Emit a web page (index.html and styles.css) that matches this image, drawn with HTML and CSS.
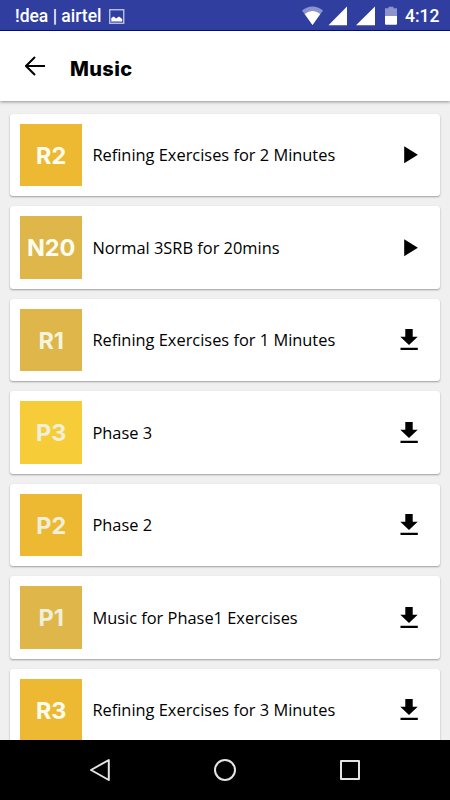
FILE: index.html
```html
<!DOCTYPE html>
<html lang="en">
<head>
    <meta charset="UTF-8">
    <meta name="viewport" content="width=device-width, initial-scale=1.0">
    <title>Music</title>
    <link rel="stylesheet" href="styles.css">
</head>
<body>

    <div class="status-bar">
        <span class="carrier">!dea | airtel</span>
        <svg class="picture-icon" width="16" height="15" viewBox="0 0 16 15">
            <rect x="0.75" y="0.75" width="14" height="13.5" fill="none" stroke="#c5c9e6" stroke-width="1.3"/>
            <path d="M2.3 12.5V9l2.5-1.5L7 9.5l3-2L13.2 10v2.5z" fill="#fff"/>
        </svg>
        <svg class="signal-icons" width="98" height="20" viewBox="0 0 98 20">
            <path d="M0 4.4Q10.5-3.2 21 4.4L10.5 19z" fill="#8d94cb"/>
            <path d="M2.7 8Q10.5 2 18.2 8L10.5 19z" fill="#fff"/>
            <path d="M26.5 19.3L45 .6v18.7zM54 19.3L73 .6v18.7z" fill="#fff"/>
            <path d="M83 2.3h3.5V.8h5v1.5H95v8H83z" fill="#8d94cb"/>
            <path d="M83 10h12v7.7q0 1-1 1H84q-1 0-1-1z" fill="#fff"/>
        </svg>
        <span class="clock">4:12</span>
    </div>

    <div class="header">
        <svg class="back-icon" width="20" height="20" viewBox="0 0 20 20">
            <path d="M10 1L1 10l9 9M1.5 10H20" fill="none" stroke="#000" stroke-width="2"/>
        </svg>
        <h1>Music</h1>
    </div>

    <div class="music-list">
        <div class="card">
            <div class="thumb orange">R2</div>
            <div class="title">Refining Exercises for 2 Minutes</div>
            <svg class="icon" width="18" height="22" viewBox="0 0 18 22"><path d="M4.2 2.2v17L17.9 10.7z"/></svg>
        </div>
        <div class="card">
            <div class="thumb sand">N20</div>
            <div class="title">Normal 3SRB for 20mins</div>
            <svg class="icon" width="18" height="22" viewBox="0 0 18 22"><path d="M4.2 2.2v17L17.9 10.7z"/></svg>
        </div>
        <div class="card">
            <div class="thumb sand dim">R1</div>
            <div class="title">Refining Exercises for 1 Minutes</div>
            <svg class="icon" width="18" height="22" viewBox="0 0 18 22"><path d="M5.3 0h7.4v7.7h5L9 16 .3 7.7h5zM.5 18.8h17.3V21H.5z"/></svg>
        </div>
        <div class="card">
            <div class="thumb yellow faded">P3</div>
            <div class="title">Phase 3</div>
            <svg class="icon" width="18" height="22" viewBox="0 0 18 22"><path d="M5.3 0h7.4v7.7h5L9 16 .3 7.7h5zM.5 18.8h17.3V21H.5z"/></svg>
        </div>
        <div class="card">
            <div class="thumb orange faded">P2</div>
            <div class="title">Phase 2</div>
            <svg class="icon" width="18" height="22" viewBox="0 0 18 22"><path d="M5.3 0h7.4v7.7h5L9 16 .3 7.7h5zM.5 18.8h17.3V21H.5z"/></svg>
        </div>
        <div class="card">
            <div class="thumb sand faded">P1</div>
            <div class="title">Music for Phase1 Exercises</div>
            <svg class="icon" width="18" height="22" viewBox="0 0 18 22"><path d="M5.3 0h7.4v7.7h5L9 16 .3 7.7h5zM.5 18.8h17.3V21H.5z"/></svg>
        </div>
        <div class="card">
            <div class="thumb orange">R3</div>
            <div class="title">Refining Exercises for 3 Minutes</div>
            <svg class="icon" width="18" height="22" viewBox="0 0 18 22"><path d="M5.3 0h7.4v7.7h5L9 16 .3 7.7h5zM.5 18.8h17.3V21H.5z"/></svg>
        </div>
    </div>

    <div class="nav-bar">
        <svg width="24" height="26" viewBox="0 0 24 26"><path d="M20.8 3v20L3 13z"/></svg>
        <svg width="24" height="26" viewBox="0 0 24 26"><circle cx="12" cy="13" r="10"/></svg>
        <svg width="24" height="26" viewBox="0 0 24 26"><rect x="3" y="4" width="18" height="18"/></svg>
    </div>

</body>
</html>
```
FILE: styles.css
```css
* {
    margin: 0;
    padding: 0;
    box-sizing: border-box;
}

body {
    font-family: 'Open Sans', 'Noto Sans', sans-serif;
    display: flex;
    flex-direction: column;
    height: 100vh;
    overflow: hidden;
    background-color: #f0f0f0;
    color: #000;
}

.status-bar {
    display: flex;
    align-items: center;
    flex: none;
    height: 31px;
    padding: 2px 10px 0 15px;
    background: #303f9f;
    border-bottom: 1px solid #000c91;
    color: white;
    font-family: Roboto, sans-serif;
    font-size: 17.5px;
    font-weight: 500;
}

.carrier {
    width: 94px;
    white-space: nowrap;
}

.signal-icons {
    margin-left: auto;
}

.clock {
    width: 35px;
    margin-left: 5px;
    white-space: nowrap;
}

.header {
    display: flex;
    align-items: center;
    flex: none;
    height: 70px;
    padding: 0 25px;
    background: white;
    box-shadow: 0 1px 3px rgba(0, 0, 0, 0.4);
}

.header h1 {
    margin: 6px 0 0 25px;
    font-family: Inter, sans-serif;
    font-size: 20px;
    font-weight: 800;
    letter-spacing: 0.4px;
}

.music-list {
    display: flex;
    flex-direction: column;
    flex: 1;
    gap: 10px;
    min-height: 0;
    padding: 12.8px 10px 0;
    overflow: hidden;
}

.card {
    display: flex;
    align-items: center;
    flex: none;
    height: 82.5px;
    padding: 10px 22px 10px 10px;
    border-radius: 3px;
    background: white;
    box-shadow: 0 1px 2px rgba(0, 0, 0, 0.35);
}

.thumb {
    display: flex;
    align-items: center;
    justify-content: center;
    width: 62.4px;
    height: 62.5px;
    color: #fcfdef;
    font-family: Inter, sans-serif;
    font-size: 23.5px;
    font-weight: 700;
}

.orange { background: #eeb932; }
.sand { background: #deb64a; }
.yellow { background: #f6cd38; }
.dim { color: #f5f4df; }
.faded { color: #f0efdc; }

.title {
    flex: 1;
    margin-left: 10px;
    padding-bottom: 1px;
    font-size: 16.4px;
    white-space: nowrap;
}

.nav-bar {
    display: flex;
    align-items: center;
    justify-content: center;
    flex: none;
    gap: 101px;
    height: 60px;
    background: black;
}

.nav-bar path, .nav-bar circle, .nav-bar rect {
    fill: none;
    stroke: #e4e4e4;
    stroke-width: 2;
    stroke-linejoin: round;
}
```
